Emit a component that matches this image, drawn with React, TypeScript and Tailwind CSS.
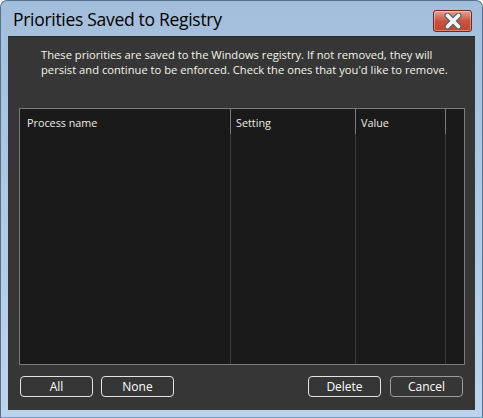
import React from "react"

const font = { fontFamily: '"Segoe UI", "Open Sans", "Noto Sans", sans-serif' }

function CloseButton() {
  return (
    <button className="w-[39px] h-[22px] rounded-[3px] border border-[#6a2a24] bg-gradient-to-b from-[#e3a293] via-[#c9533f] to-[#c5452d] flex items-center justify-center shadow-[inset_0_0_0_1px_rgba(255,255,255,0.35)]">
      <svg width="20" height="16" viewBox="0 0 20 16">
        <path
          d="M4.5 2.5 L15.5 13.5 M15.5 2.5 L4.5 13.5"
          stroke="#55606c"
          strokeWidth="6"
          strokeLinecap="round"
          fill="none"
        />
        <path
          d="M4.5 2.5 L15.5 13.5 M15.5 2.5 L4.5 13.5"
          stroke="#f4f6f8"
          strokeWidth="3.6"
          strokeLinecap="round"
          fill="none"
        />
      </svg>
    </button>
  )
}

function DialogButton({ label, muted }: { label: string; muted?: boolean }) {
  return (
    <button
      className={
        muted
          ? "w-[73px] h-[21px] rounded-[4px] border border-[#9a9a9a] bg-[#363636] text-[12px] text-white leading-none"
          : "w-[73px] h-[21px] rounded-[4px] border border-[#e4e4e4] bg-[#363636] text-[12px] text-white leading-none"
      }
    >
      {label}
    </button>
  )
}

export default function App() {
  return (
    <div style={font} className="w-[483px] h-[418px] flex flex-col rounded-t-[7px] border border-[#55718f] border-b-[#3fb6c6] bg-gradient-to-b from-[#a3bedb] to-[#bdd5ec]">
      <div className="h-[35px] flex items-start justify-between pl-[12px] pr-[10px]">
        <span className="text-[17.5px] leading-none text-black mt-[10px] tracking-[-0.3px]">
          Priorities Saved to Registry
        </span>
        <div className="mt-[9px]">
          <CloseButton />
        </div>
      </div>

      <div className="flex-1 mx-[7px] mb-[7px] bg-[#363636] border-t border-[#2a2a2a] flex flex-col">
        <p className="pl-[33px] pt-[10px] text-[11.2px] leading-[15px] text-[#f4f4ea] h-[71px]">
          These priorities are saved to the Windows registry. If not removed, they will
          <br />
          persist and continue to be enforced. Check the ones that you'd like to remove.
        </p>

        <div className="ml-[11px] mr-[10px] h-[257px] border border-[#7a7a7a] bg-[#1a1a1a] flex text-[10.8px] text-[#ecece4]">
          <div className="w-[210px] flex flex-col">
            <div className="h-[25px] pl-[7px] pt-[6px]">Process name</div>
          </div>
          <div className="w-[125px] flex flex-col border-l border-[#3c3c3c]">
            <div className="h-[25px] pl-[5px] pt-[6px] -ml-px border-l border-[#7a7a7a]">Setting</div>
          </div>
          <div className="w-[90px] flex flex-col border-l border-[#3c3c3c]">
            <div className="h-[25px] pl-[5px] pt-[6px] -ml-px border-l border-[#7a7a7a]">Value</div>
          </div>
          <div className="flex-1 flex flex-col border-l border-[#3c3c3c]">
            <div className="h-[25px] -ml-px border-l border-[#7a7a7a]" />
          </div>
        </div>

        <div className="flex items-center justify-between pl-[12px] pr-[12px] mt-[11px]">
          <div className="flex gap-[8px]">
            <DialogButton label="All" />
            <DialogButton label="None" />
          </div>
          <div className="flex gap-[9px]">
            <DialogButton label="Delete" />
            <DialogButton label="Cancel" muted />
          </div>
        </div>
      </div>
    </div>
  )
}
